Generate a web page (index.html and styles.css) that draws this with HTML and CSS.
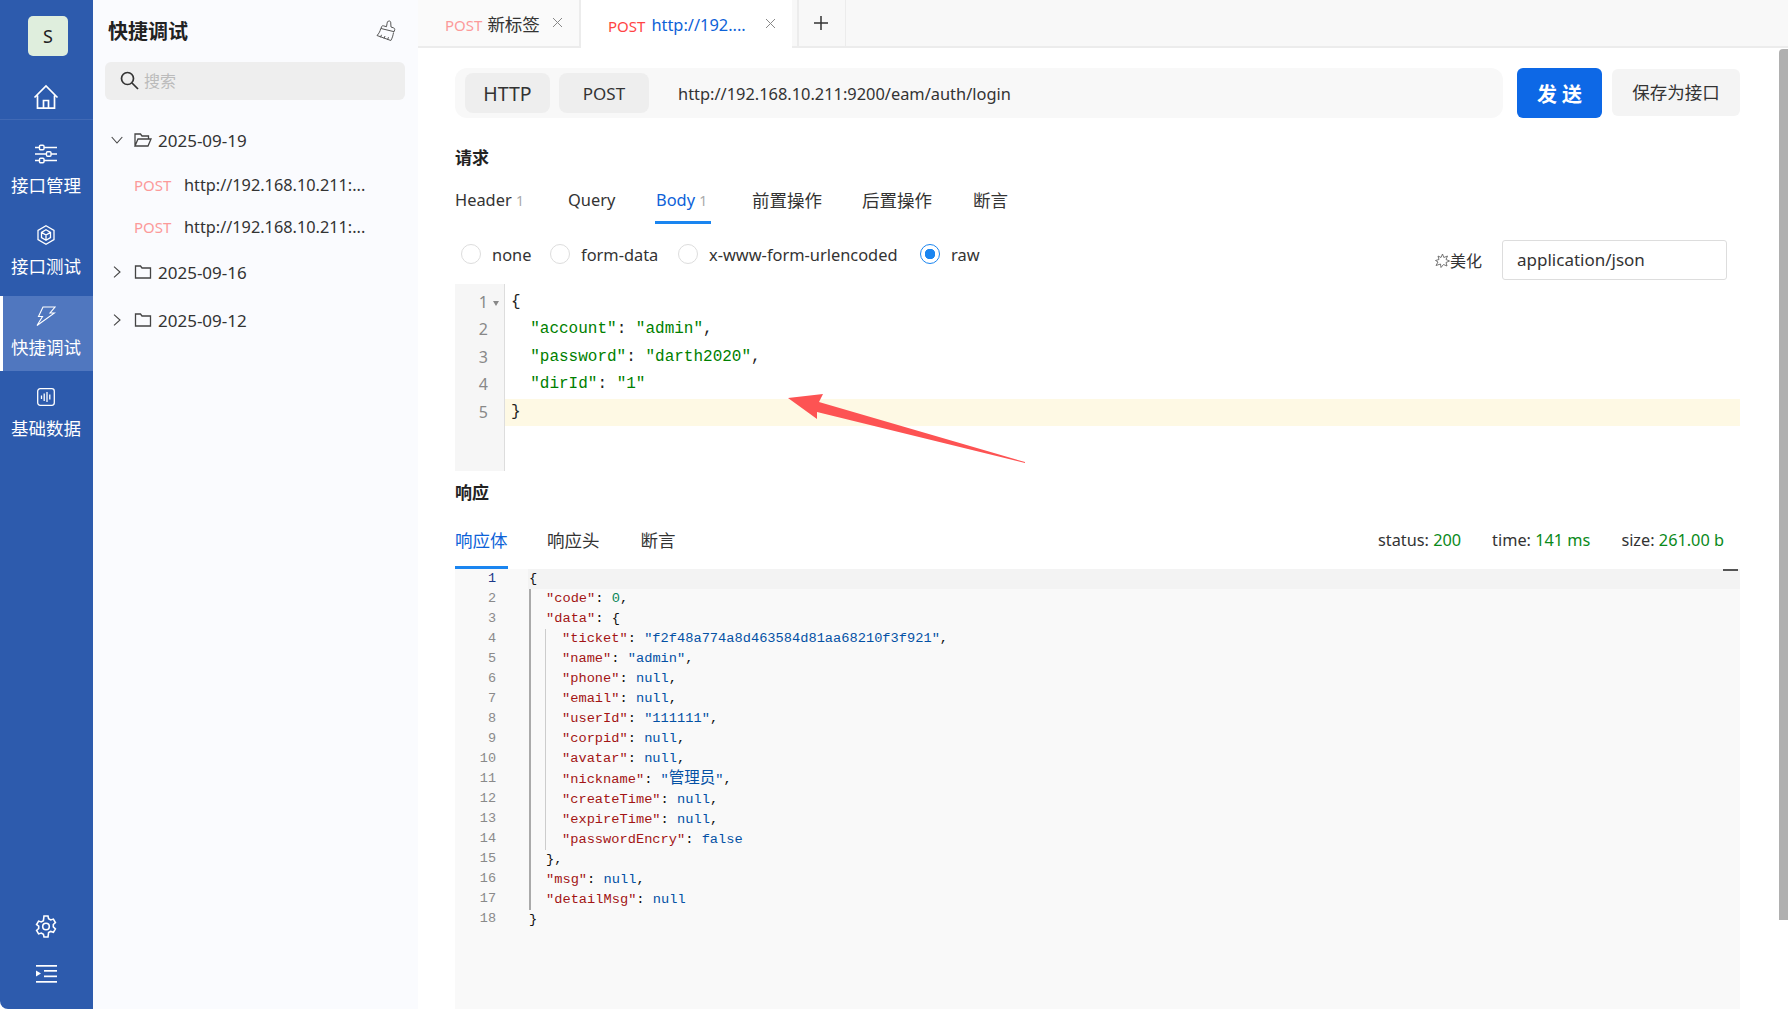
FILE: index.html
```html
<!DOCTYPE html>
<html lang="en">
<head>
    <meta charset="UTF-8">
    <meta name="viewport" content="width=device-width, initial-scale=1.0">
    <title>快捷调试</title>
    <link rel="stylesheet" href="styles.css">
</head>
<body>
<div class="app">
    <aside class="sidebar">
        <div class="avatar">S</div>
        <div class="home">
            <svg width="26" height="26" viewBox="0 0 26 26" fill="none" stroke="#fff" stroke-width="1.7"><path d="M1.500 13.500 13 2l11.500 11.500M4.500 11.500V24.200h17V11.500M10.500 24V16.500h5V24"/></svg>
        </div>
        <nav class="nav">
            <div class="nav-item">
                <svg width="22" height="20" viewBox="0 0 22 20" fill="none" stroke="#fff" stroke-width="1.4"><path d="M0 3.500h4.500M9 3.500h13M0 10h11.500M16 10h6M0 16.500h4.500M9 16.500h13"/><rect x="4.500" y="1.200" width="4.500" height="4.500" rx="1"/><rect x="11.500" y="7.800" width="4.500" height="4.500" rx="1"/><rect x="4.500" y="14.300" width="4.500" height="4.500" rx="1"/></svg>
                <span>接口管理</span>
            </div>
            <div class="nav-item">
                <svg width="20" height="20" viewBox="0 0 20 20" fill="none" stroke="#fff" stroke-width="1.3"><path d="M10 .8 18 5.400v9.200L10 19.200 2 14.600V5.400z"/><path d="M10 4.800 14.500 7.400v5.200L10 15.200 5.500 12.600V7.400zM5.500 7.400 10 10l4.500-2.600M10 10v5.200"/></svg>
                <span>接口测试</span>
            </div>
            <div class="nav-item active">
                <svg width="20" height="20" viewBox="0 0 20 20" fill="none" stroke="#fff" stroke-width="1.1"><path d="M7 1h12l-5 6h4.500L1 19.500 6.500 10.500H2.500z"/></svg>
                <span>快捷调试</span>
            </div>
            <div class="nav-item">
                <svg width="18" height="18" viewBox="0 0 18 18" fill="none" stroke="#fff" stroke-width="1.3"><rect x=".7" y=".7" width="16.600" height="16.600" rx="2.500"/><path d="M4.500 7.500v3.500M7.200 5.500v7.500M10 4v10M12.800 6.500v5"/></svg>
                <span>基础数据</span>
            </div>
        </nav>
        <div class="side-bottom">
            <svg width="22" height="23" viewBox="0 0 22 23" fill="none" stroke="#fff" stroke-width="1.6"><path d="M9 1h4l.6 2.800 2.100 1.200 2.700-.9 2 3.500-2.100 1.900v2.400l2.100 1.900-2 3.500-2.700-.9-2.100 1.200L13 22H9l-.6-2.800-2.100-1.200-2.700.9-2-3.500 2.100-1.900V11.100L1.600 9.600l2-3.500 2.700.9 2.100-1.200z"/><circle cx="11" cy="11.500" r="3.300"/></svg>
            <svg width="21" height="18" viewBox="0 0 21 18" fill="#fff"><rect y="0" width="21" height="1.700"/><rect x="8" y="5" width="13" height="1.700"/><rect x="8" y="10.500" width="13" height="1.700"/><rect y="16" width="21" height="1.700"/><path d="M0 5.500 5 8.500 0 11.500z"/></svg>
        </div>
    </aside>

    <section class="panel">
        <div class="panel-head">
            <h2>快捷调试</h2>
            <svg width="20" height="22" viewBox="0 0 20 22" fill="none" stroke="#555" stroke-width="1"><path d="M12.500 1.200c1-.5 2 0 2.200 1l.3 4.800 2.800 1c.8.300 1.100 1 .9 1.700l-.6 2L5 8.500l.6-1.800c.3-.8 1-1.100 1.700-.9l3.200.9.600-3.500c.1-.6.400-1.700.9-2zM4.700 8.500C4.300 11 3 13.500 1 15.500l13.800 5c1.300-2 2.300-5 2.700-8M4.500 17.300l1-2.500M8 18.500l1-2.500M11.500 19.700l1-2.500"/></svg>
        </div>
        <div class="search">
            <svg width="19" height="19" viewBox="0 0 19 19" fill="none" stroke="#333" stroke-width="1.700"><circle cx="7.500" cy="7.500" r="6"/><path d="m12 12 6 6"/></svg>
            <span>搜索</span>
        </div>
        <div class="tree">
            <div class="folder open">
                <svg class="caret" width="12" height="12" viewBox="0 0 12 12" fill="none" stroke="#444" stroke-width="1.100"><path d="M.7 3 6 9l5.300-6"/></svg>
                <svg class="dir" width="18" height="14" viewBox="0 0 18 14" fill="none" stroke="#444" stroke-width="1.300"><path d="M1 13V1h5.500l1.500 2h6.500v3M1 13l3-7h13l-3 7z"/></svg>
                <span>2025-09-19</span>
            </div>
            <div class="leaf first"><em>POST</em><span>http://192.168.10.211:...</span></div>
            <div class="leaf"><em>POST</em><span>http://192.168.10.211:...</span></div>
            <div class="folder second">
                <svg class="caret" width="12" height="12" viewBox="0 0 12 12" fill="none" stroke="#444" stroke-width="1.100"><path d="m3 .7 6 5.300-6 5.300"/></svg>
                <svg class="dir" width="18" height="14" viewBox="0 0 18 14" fill="none" stroke="#444" stroke-width="1.300"><path d="M1.500 13V1h5l1.500 2h8.500v10z"/></svg>
                <span>2025-09-16</span>
            </div>
            <div class="folder third">
                <svg class="caret" width="12" height="12" viewBox="0 0 12 12" fill="none" stroke="#444" stroke-width="1.100"><path d="m3 .7 6 5.300-6 5.300"/></svg>
                <svg class="dir" width="18" height="14" viewBox="0 0 18 14" fill="none" stroke="#444" stroke-width="1.300"><path d="M1.500 13V1h5l1.500 2h8.500v10z"/></svg>
                <span>2025-09-12</span>
            </div>
        </div>
    </section>

    <main class="main">
        <div class="tabbar">
            <div class="tab tab-new">
                <em class="faded">POST</em><span class="cn">新标签</span>
                <svg class="close" width="11" height="11" viewBox="0 0 11 11" stroke="#888" stroke-width="1"><path d="m1 1 9 9M10 1l-9 9"/></svg>
            </div>
            <div class="tab tab-cur">
                <em>POST</em><span class="blue">http://192....</span>
                <svg class="close" width="11" height="11" viewBox="0 0 11 11" stroke="#888" stroke-width="1"><path d="m1 1 9 9M10 1l-9 9"/></svg>
            </div>
            <div class="tab-add">
                <svg width="14" height="14" viewBox="0 0 14 14" stroke="#333" stroke-width="1.500"><path d="M7 0v14M0 7h14"/></svg>
            </div>
        </div>

        <div class="content">
            <div class="url-row">
                <div class="url-box">
                    <div class="chip chip-http">HTTP</div>
                    <div class="chip chip-post">POST</div>
                    <div class="url-text">http://192.168.10.211:9200/eam/auth/login</div>
                </div>
                <button class="send">发 送</button>
                <button class="save">保存为接口</button>
            </div>

            <h3 class="req-title">请求</h3>
            <div class="tabs req-tabs">
                <div class="t-header">Header <i>1</i></div>
                <div class="t-query">Query</div>
                <div class="t-body on">Body <i>1</i></div>
                <div class="t-pre">前置操作</div>
                <div class="t-post">后置操作</div>
                <div class="t-assert">断言</div>
            </div>

            <div class="body-row">
                <div class="radio r1"><b></b>none</div>
                <div class="radio r2"><b></b>form-data</div>
                <div class="radio r3"><b></b>x-www-form-urlencoded</div>
                <div class="radio r4 checked"><b></b>raw</div>
                <div class="beautify">
                    <svg width="15" height="15" viewBox="0 0 15 15" fill="none" stroke="#666" stroke-width=".9"><path d="m7.500 1 1.300 3.500L12.500 3l-1.500 3.500 3.500 1.500-3.500 1.500 1 3.500-3.500-1.500L6 14.500 5.500 11 1 12.500 3 9 .5 7.500 4 6.500 3 3l3 1.500z"/></svg>
                    <span>美化</span>
                </div>
                <div class="ctype">application/json</div>
            </div>

            <div class="editor">
                <div class="gutter">
                    <div class="fold-mark">1</div>
                    <div>2</div>
                    <div>3</div>
                    <div>4</div>
                    <div>5</div>
                </div>
                <div class="code">
                    <div class="ln">{</div>
                    <div class="ln">  <span class="str">"account"</span>: <span class="str">"admin"</span>,</div>
                    <div class="ln">  <span class="str">"password"</span>: <span class="str">"darth2020"</span>,</div>
                    <div class="ln">  <span class="str">"dirId"</span>: <span class="str">"1"</span></div>
                    <div class="ln cur">}</div>
                </div>
                <svg class="arrow" width="260" height="90" viewBox="0 0 260 90"><polygon fill="#fd5353" points="3,24 38,20 34,28 240,88 240,89 32,38 32,45"/></svg>
            </div>

            <h3 class="res-title">响应</h3>
            <div class="res-head">
                <div class="tabs res-tabs">
                    <div class="t-r1 on">响应体</div>
                    <div class="t-r2">响应头</div>
                    <div class="t-r3">断言</div>
                </div>
                <div class="stats">
                    <span>status: <u>200</u></span>
                    <span>time: <u>141 ms</u></span>
                    <span>size: <u>261.00 b</u></span>
                </div>
            </div>

            <div class="result">
                <div class="r-gutter">
                    <div class="now">1</div><div>2</div><div>3</div><div>4</div><div>5</div><div>6</div><div>7</div><div>8</div><div>9</div><div>10</div><div>11</div><div>12</div><div>13</div><div>14</div><div>15</div><div>16</div><div>17</div><div>18</div>
                </div>
                <div class="r-code">
                    <div class="r-ln top">{</div>
                    <div class="guide">
                        <div><span class="k">"code"</span>: <span class="n">0</span>,</div>
                        <div><span class="k">"data"</span>: {</div>
                        <div class="guide inner">
                            <div><span class="k">"ticket"</span>: <span class="v">"f2f48a774a8d463584d81aa68210f3f921"</span>,</div>
                            <div><span class="k">"name"</span>: <span class="v">"admin"</span>,</div>
                            <div><span class="k">"phone"</span>: <span class="v">null</span>,</div>
                            <div><span class="k">"email"</span>: <span class="v">null</span>,</div>
                            <div><span class="k">"userId"</span>: <span class="v">"111111"</span>,</div>
                            <div><span class="k">"corpid"</span>: <span class="v">null</span>,</div>
                            <div><span class="k">"avatar"</span>: <span class="v">null</span>,</div>
                            <div><span class="k">"nickname"</span>: <span class="v">"<span class="han">管理员</span>"</span>,</div>
                            <div><span class="k">"createTime"</span>: <span class="v">null</span>,</div>
                            <div><span class="k">"expireTime"</span>: <span class="v">null</span>,</div>
                            <div><span class="k">"passwordEncry"</span>: <span class="v">false</span></div>
                        </div>
                        <div>},</div>
                        <div><span class="k">"msg"</span>: <span class="v">null</span>,</div>
                        <div><span class="k">"detailMsg"</span>: <span class="v">null</span></div>
                    </div>
                    <div class="r-ln">}</div>
                </div>
                <div class="ruler"></div>
            </div>
        </div>
        <div class="scrollbar"></div>
    </main>
</div>
</body>
</html>
```

FILE: styles.css
```css
* {
    box-sizing: border-box;
}
html, body {
    margin: 0;
    height: 100%;
    overflow: hidden;
}
body {
    font-family: "Noto Sans", "Noto Sans CJK SC", sans-serif;
    color: #333;
    background: #fff;
}
em, i, u {
    font-style: normal;
    text-decoration: none;
}
h2, h3 {
    margin: 0;
}
.app {
    display: flex;
    height: 1009px;
}

/* left blue bar */
.sidebar {
    width: 93px;
    flex: none;
    background: #2d5bad;
    border-bottom-left-radius: 8px;
    color: #fff;
    display: flex;
    flex-direction: column;
    padding-top: 16px;
}
.avatar {
    width: 40px;
    height: 40px;
    margin-left: 28px;
    background: #dfeedd;
    border-radius: 5px;
    color: #222;
    font-size: 18px;
    display: flex;
    align-items: center;
    justify-content: center;
}
.home {
    height: 64px;
    border-bottom: 1px solid #4069b5;
    padding: 28px 1px 0 0;
    display: flex;
    justify-content: center;
}
.nav {
    margin-top: 14px;
    display: flex;
    flex-direction: column;
    gap: 6px;
}
.nav-item {
    height: 75px;
    display: flex;
    flex-direction: column;
    align-items: center;
    justify-content: flex-start;
    padding-top: 10px;
    font-size: 17.500px;
    line-height: 24px;
    border-left: 3px solid transparent;
}
.nav-item svg {
    height: 20px;
    margin-bottom: 9px;
    margin-left: -4px;
}
.nav-item span {
    margin-left: -4px;
}
.nav-item.active {
    background: #5077bf;
    border-left-color: #fff;
}
.side-bottom {
    margin-top: auto;
    padding: 0 1px 26px 0;
    display: flex;
    flex-direction: column;
    align-items: center;
    gap: 27px;
}

/* middle tree panel */
.panel {
    width: 325px;
    flex: none;
    background: #fafbfe;
}
.panel-head {
    height: 62px;
    padding: 18px 22px 0 15px;
    display: flex;
    justify-content: space-between;
    align-items: flex-start;
}
.panel-head h2 {
    font-size: 20px;
    line-height: 27px;
    font-weight: 700;
    color: #222;
}
.panel-head svg {
    margin-top: 2px;
}
.search {
    margin-left: 12px;
    width: 300px;
    height: 38px;
    background: #eee;
    border-radius: 6px;
    display: flex;
    align-items: center;
    padding: 0 0 2px 15px;
    gap: 5px;
    color: #bbb;
    font-size: 16px;
}
.tree {
    padding-left: 18px;
    font-size: 17px;
    color: #333;
}
.folder {
    display: flex;
    align-items: center;
    height: 24px;
}
.folder.open {
    margin-top: 28px;
}
.folder.second {
    margin-top: 21px;
}
.folder.third {
    margin-top: 24px;
}
.caret {
    margin-right: 11px;
    flex: none;
}
.dir {
    margin-right: 6px;
    flex: none;
}
.leaf {
    display: flex;
    align-items: center;
    height: 24px;
    margin-top: 18px;
    padding-left: 23px;
    font-size: 16.300px;
}
.leaf.first {
    margin-top: 21px;
}
.leaf em {
    width: 50px;
    font-size: 15px;
    color: #fc9a9a;
}

/* tabs on top */
.main {
    flex: 1;
    min-width: 0;
    position: relative;
}
.tabbar {
    height: 48px;
    background: #f8f8f8;
    border-bottom: 2px solid #ececec;
    display: flex;
}
.tab {
    height: 48px;
    display: flex;
    align-items: center;
    font-size: 16.400px;
    white-space: nowrap;
    flex: none;
}
.tab em {
    font-size: 15px;
    color: #f44;
    margin-right: 6px;
    padding-top: 3px;
}
.tab em.faded {
    color: #fc9a9a;
    margin-right: 5px;
}
.cn {
    font-size: 17.500px;
}
.tab-new {
    width: 163px;
    padding-left: 27px;
    background: #fafafa;
    border-bottom: 2px solid #ececec;
    border-right: 2px solid #ececec;
}
.tab-cur {
    width: 211px;
    padding-left: 27px;
    background: #fff;
}
.blue {
    color: #0d62d8;
}
.close {
    margin: 0 16px 2px auto;
}
.tab-add {
    width: 49px;
    height: 46px;
    padding-right: 3px;
    border-left: 2px solid #ececec;
    border-right: 1px solid #ececec;
    display: flex;
    align-items: center;
    justify-content: center;
    margin-left: 5px;
}

/* request */
.content {
    padding: 20px 48px 0 37px;
}
.url-row {
    display: flex;
    align-items: flex-start;
    height: 50px;
}
.url-box {
    width: 1048px;
    height: 50px;
    background: #f8f8f8;
    border-radius: 12px;
    display: flex;
    align-items: center;
    padding-left: 10px;
}
.chip {
    height: 40px;
    background: #eee;
    border-radius: 8px;
    display: flex;
    align-items: center;
    justify-content: center;
}
.chip-http {
    width: 85px;
    font-size: 19.500px;
}
.chip-post {
    width: 90px;
    margin-left: 9px;
    font-size: 17px;
}
.url-text {
    margin-left: 29px;
    font-size: 16.400px;
}
button {
    border: none;
    font-family: inherit;
    cursor: pointer;
}
.send {
    width: 85px;
    height: 50px;
    margin-left: 14px;
    background: #0d68e6;
    color: #fff;
    border-radius: 6px;
    font-size: 20px;
    font-weight: 700;
}
.save {
    width: 128px;
    height: 47px;
    margin-left: 10px;
    margin-top: 1px;
    padding-bottom: 3px;
    background: #f4f4f4;
    color: #333;
    border-radius: 6px;
    font-size: 17.500px;
}
.req-title {
    margin-top: 28px;
    font-size: 17px;
    line-height: 24px;
    color: #222;
}
.tabs {
    display: flex;
    font-size: 17.500px;
    line-height: 24px;
}
.tabs > div {
    white-space: nowrap;
    flex: none;
}
.tabs i {
    font-size: 14px;
    color: #aaa;
}
.tabs .on {
    color: #0d62d8;
    border-bottom: 3px solid #1a85f0;
}
.req-tabs {
    margin-top: 18px;
    height: 36px;
}
.req-tabs > div {
    height: 36px;
}
.t-header {
    width: 113px;
    font-size: 16.400px;
}
.t-query {
    width: 87px;
    font-size: 16.400px;
}
.t-body {
    width: 56px;
    margin-right: 41px;
    padding-left: 1px;
    font-size: 16.400px;
}
.t-pre {
    width: 110px;
}
.t-post {
    width: 111px;
}
.body-row {
    height: 60px;
    display: flex;
    align-items: flex-start;
    font-size: 16.400px;
}
.radio {
    display: flex;
    align-items: center;
    height: 24px;
    margin-top: 18px;
    flex: none;
    white-space: nowrap;
}
.radio b {
    width: 20px;
    height: 20px;
    border: 1px solid #ddd;
    border-radius: 50%;
    margin-right: 11px;
    flex: none;
    background: #fff;
}
.r1 {
    margin-left: 6px;
    width: 89px;
}
.r2 {
    width: 128px;
}
.r3 {
    width: 242px;
}
.checked b {
    border: 1px solid #1a85f0;
    background: radial-gradient(circle, #1a85f0 0 5px, #fff 5.500px);
}
.beautify {
    margin-left: auto;
    margin-top: 24px;
    display: flex;
    align-items: center;
    font-size: 16px;
    height: 24px;
}
.ctype {
    width: 225px;
    height: 40px;
    margin: 16px 13px 0 20px;
    border: 1px solid #ddd;
    border-radius: 3px;
    padding-left: 14px;
    line-height: 38px;
    font-size: 17px;
}

/* editors */
.editor {
    display: flex;
    height: 187px;
    position: relative;
    font-family: "Liberation Mono", monospace;
    font-size: 16px;
    line-height: 27.400px;
}
.gutter {
    width: 50px;
    background: #f6f6f6;
    border-right: 1px solid #ddd;
    padding: 5px 16px 0 0;
    text-align: right;
    color: #888;
    font-family: "Noto Sans", sans-serif;
    font-size: 16px;
}
.fold-mark {
    position: relative;
}
.fold-mark::after {
    content: "";
    position: absolute;
    right: -11px;
    top: 12px;
    border: 3.500px solid transparent;
    border-top: 5px solid #888;
}
.code {
    flex: 1;
    padding-top: 5px;
    color: #222;
}
.ln {
    padding-left: 6px;
    white-space: pre;
}
.ln.cur {
    background: #fef9e4;
}
.str {
    color: #008000;
}
.arrow {
    position: absolute;
    left: 330px;
    top: 90px;
}
.res-title {
    margin-top: 10px;
    font-size: 17px;
    line-height: 24px;
    color: #222;
}
.res-head {
    display: flex;
    justify-content: space-between;
    align-items: flex-start;
    margin-top: 23px;
    height: 41px;
    padding-right: 16px;
}
.res-tabs > div {
    height: 41px;
}
.t-r1 {
    width: 53px;
    margin-right: 39px;
}
.t-r2 {
    margin-right: 41px;
}
.stats {
    font-size: 16.300px;
    line-height: 24px;
    display: flex;
    gap: 31px;
}
.stats u {
    color: #0a8a1a;
}
.result {
    height: 440px;
    background: #f9f9f9;
    display: flex;
    position: relative;
    font-family: "Liberation Mono", "Noto Sans CJK SC", monospace;
    font-size: 13.700px;
    line-height: 20px;
}
.r-gutter {
    width: 73px;
    padding-right: 32px;
    text-align: right;
    color: #8a8a8a;
    flex: none;
    font-size: 13.500px;
}
.r-gutter .now {
    color: #1d3a8a;
}
.r-code {
    flex: 1;
    white-space: nowrap;
    color: #111;
}
.r-ln {
    padding-left: 1px;
}
.r-ln.top {
    background: #f3f3f3;
}
.guide {
    border-left: 2px solid #aaa;
    margin-left: 1px;
    padding-left: 15px;
}
.guide.inner {
    border-left: 1px solid #ccc;
    margin-left: -1px;
    padding-left: 16px;
}
.han {
    font-size: 15.500px;
}
.k {
    color: #a31515;
}
.v {
    color: #0451a5;
}
.n {
    color: #098658;
}
.ruler {
    position: absolute;
    right: 2px;
    top: 0;
    width: 15px;
    height: 2px;
    background: #555;
}
.scrollbar {
    position: absolute;
    right: 0;
    top: 49px;
    width: 9px;
    height: 871px;
    background: #b0b0b0;
    border-top-left-radius: 4px;
}
```
